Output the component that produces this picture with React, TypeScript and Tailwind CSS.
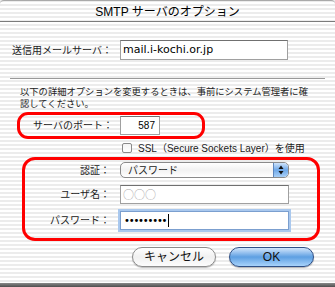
import React from "react";

const FONT = "[font-family:'Liberation_Sans','Noto_Sans_CJK_JP',sans-serif]";

export default function App() {
  return (
    <div
      className={`w-[335px] h-[287px] overflow-hidden flex flex-col text-black ${FONT} bg-[repeating-linear-gradient(180deg,#ececec_0px,#ececec_2px,#ffffff_2px,#ffffff_4px)]`}
    >
      {/* title bar */}
      <div className="h-[22px] shrink-0 border-t border-t-[#a9a9a9] border-b border-b-[#7b7b7b] rounded-t-[4px] flex items-center justify-center text-[12px] leading-none pt-[1px]">
        SMTP サーバのオプション
      </div>

      {/* server row */}
      <div className="mt-[18px] flex items-center h-[20px]">
        <div className="pl-[12px] w-[120px] text-[10px] whitespace-nowrap text-[#222]">送信用メールサーバ：</div>
        <div className="w-[168px] h-[20px] bg-white border border-[#a0a0a0] border-t-[#707070] flex items-center px-[2px] text-[11px] [font-family:'DejaVu_Sans',sans-serif]">
          mail.i-kochi.or.jp
        </div>
      </div>

      {/* separator */}
      <div className="mt-[18px] mx-[10px] h-px bg-[#9a9a9a] shrink-0" />

      {/* paragraph */}
      <div className="mt-[7px] pl-[20px] text-[9.3px] leading-[12px] text-[#222]">
        <div className="whitespace-nowrap">以下の詳細オプションを変更するときは、事前にシステム管理者に確</div>
        <div className="whitespace-nowrap">認してください。</div>
      </div>

      {/* port red box */}
      <div className="mt-[2px] ml-[17px] w-[188px] h-[27px] border-[3px] border-[#ff0000] rounded-[11px] flex items-center shrink-0">
        <div className="pl-[13px] w-[100px] text-[10px] whitespace-nowrap text-[#222]">サーバのポート：</div>
        <div className="w-[40px] h-[19px] bg-white border border-[#a0a0a0] border-t-[#707070] flex items-center justify-end pr-[4px] text-[10px]">
          587
        </div>
      </div>

      {/* ssl checkbox */}
      <div className="mt-[4px] ml-[122px] flex items-center h-[10px]">
        <div className="w-[10px] h-[10px] border border-[#8a8a8a] rounded-[2px] bg-gradient-to-b from-[#f4f4f4] to-[#ffffff]" />
        <div className="ml-[6px] text-[10px] whitespace-nowrap text-[#222]">SSL（Secure Sockets Layer）を使用</div>
      </div>

      {/* auth red box */}
      <div className="mt-[4px] ml-[22px] w-[298px] h-[84px] border-[3px] border-[#ff0000] rounded-[13px] flex flex-col shrink-0">
        {/* auth popup */}
        <div className="mt-[2px] flex items-center h-[16px]">
          <div className="w-[85px] text-right text-[10px] whitespace-nowrap text-[#222]">認証：</div>
          <div className="ml-[10px] w-[169px] h-[16px] rounded-[5px] border border-[#8a8a8a] bg-gradient-to-b from-[#ffffff] via-[#f2f2f2] to-[#ffffff] flex items-center overflow-hidden">
            <div className="flex-1 pl-[7px] text-[10px] whitespace-nowrap text-[#222]">パスワード</div>
            <div className="w-[15px] h-full bg-gradient-to-b from-[#cfe3fa] via-[#6ea8e8] to-[#a9d0f7] border-l border-[#5d86bd] flex items-center justify-center rounded-r-[4px]">
              <svg width="6" height="10" viewBox="0 0 6 10">
                <path d="M3 0.5 L5.5 4 L0.5 4 Z" fill="#111" />
                <path d="M3 9.5 L5.5 6 L0.5 6 Z" fill="#111" />
              </svg>
            </div>
          </div>
        </div>

        {/* username */}
        <div className="mt-[7px] flex items-center h-[19px]">
          <div className="w-[85px] text-right text-[10px] whitespace-nowrap text-[#222]">ユーザ名：</div>
          <div className="ml-[10px] w-[169px] h-[19px] bg-white border border-[#a0a0a0] border-t-[#707070] flex items-center pl-[2px] text-[11px] text-[#a8a8a8] [font-family:'Noto_Sans_CJK_JP',sans-serif] leading-none">
            ○○○
          </div>
        </div>

        {/* password */}
        <div className="mt-[7px] flex items-center h-[19px]">
          <div className="w-[85px] text-right text-[10px] whitespace-nowrap text-[#222]">パスワード：</div>
          <div className="ml-[10px] w-[169px] h-[19px] bg-white border border-[#7b9fcf] shadow-[0_0_0_2px_#a9c8ee] flex items-center pl-[3px] text-[10px] [font-family:'DejaVu_Sans',sans-serif]">
            <span className="tracking-[-1.2px]">•••••••••</span>
            <span className="ml-[2px] w-px h-[13px] bg-black" />
          </div>
        </div>
      </div>

      {/* buttons */}
      <div className="mt-[6px] flex justify-end pr-[21px] gap-[13px]">
        <div className="w-[84px] h-[20px] rounded-full border border-[#8c8c8c] bg-gradient-to-b from-[#ffffff] via-[#f0f0f0] to-[#fdfdfd] shadow-[0_1px_1px_rgba(0,0,0,0.25)] flex items-center justify-center text-[12px] text-[#111]">
          キャンセル
        </div>
        <div className="w-[85px] h-[20px] rounded-full border border-[#2e4f86] bg-gradient-to-b from-[#d3e6fb] via-[#5d9fe2] to-[#a8d3fb] shadow-[0_1px_1px_rgba(0,0,0,0.3)] flex items-center justify-center text-[12px] text-[#111]">
          OK
        </div>
      </div>

      <div className="mt-auto h-[4px] shrink-0 bg-gradient-to-b from-[#8a8a8a] to-[#4e4e4e]" />
    </div>
  );
}
